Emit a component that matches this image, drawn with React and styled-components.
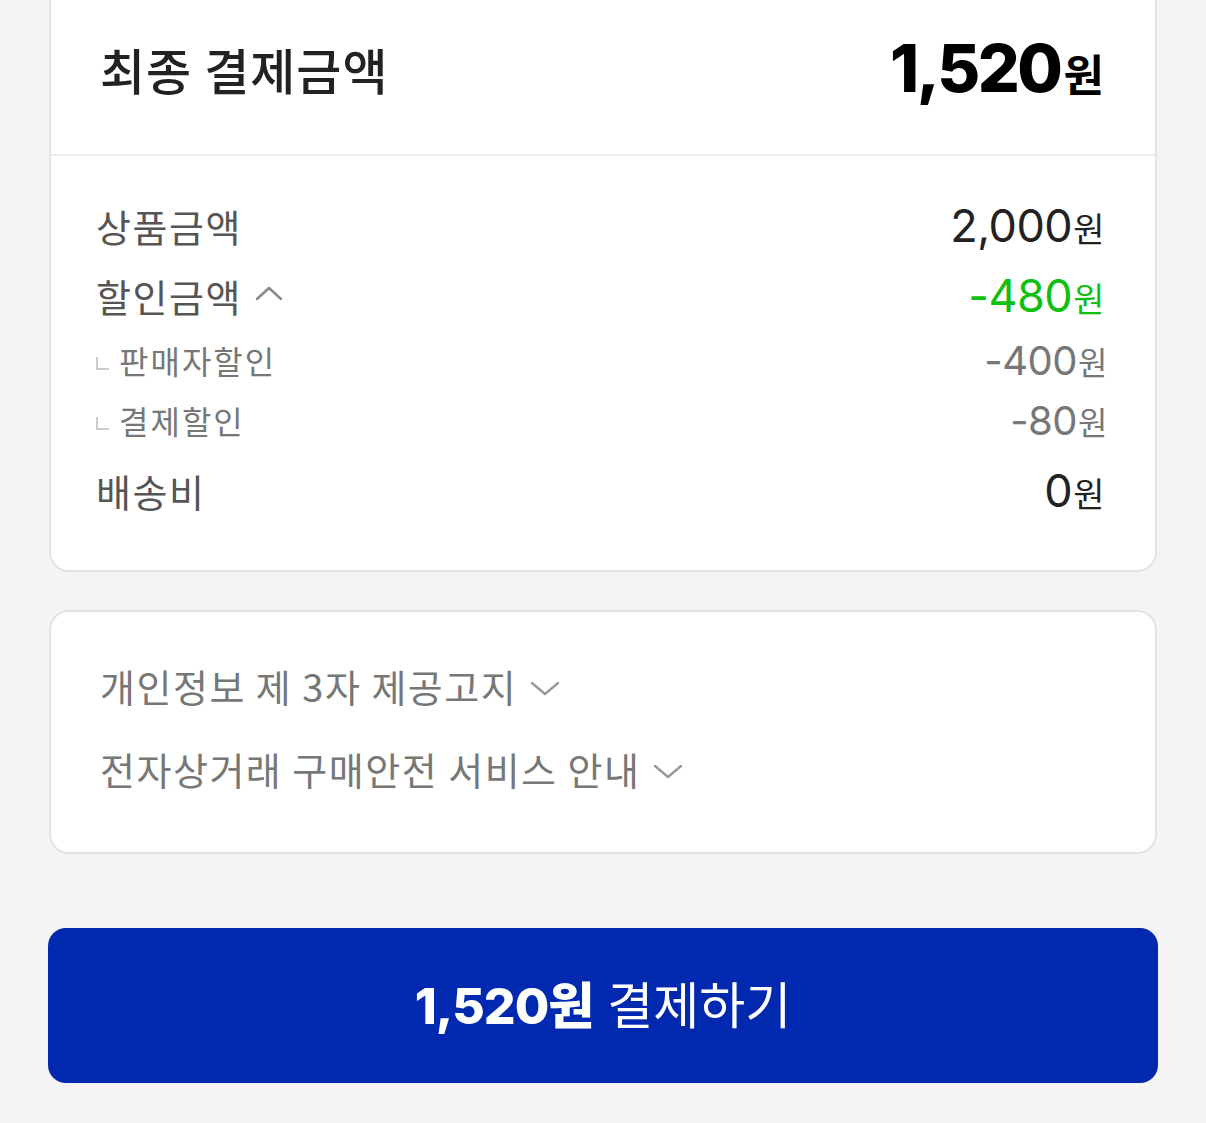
import React from 'react'
import styled, {createGlobalStyle} from 'styled-components'

const GlobalStyle = createGlobalStyle`
  html, body {
    margin: 0;
    padding: 0;
    background: #f4f4f4;
  }
  body {
    font-family: "Inter", "Noto Sans CJK KR", sans-serif;
    overflow: hidden;
  }
`;

//Data for the breakdown rows
const rows = [
    {label: '상품금액', value: '2,000', kind: 'main'},
    {label: '할인금액', value: '-480', kind: 'discount', toggle: true},
    {label: '판매자할인', value: '-400', kind: 'sub'},
    {label: '결제할인', value: '-80', kind: 'sub'},
    {label: '배송비', value: '0', kind: 'main', spaced: true},
];

const notices = ['개인정보 제 3자 제공고지', '전자상거래 구매안전 서비스 안내'];

const ChevronUp = () => (
    <svg width="28" height="18" viewBox="0 0 28 18" fill="none">
        <path d="M2 15 L14 4 L26 15" stroke="#888" strokeWidth="2.4" strokeLinecap="round" strokeLinejoin="round"/>
    </svg>
);

const ChevronDown = () => (
    <svg width="30" height="18" viewBox="0 0 30 18" fill="none">
        <path d="M2 4 L15 15 L28 4" stroke="#999" strokeWidth="2.4" strokeLinecap="round" strokeLinejoin="round"/>
    </svg>
);

const App = () => {
    return (
        <>
            <GlobalStyle/>
            <Page>
                <Card>
                    <Header>
                        <Title>최종 결제금액</Title>
                        <Total>1,520<small>원</small></Total>
                    </Header>
                    <Breakdown>
                        {rows.map((row) => (
                            <Row kind={row.kind} spaced={row.spaced} key={row.label}>
                                <Label kind={row.kind}>
                                    {row.kind === 'sub' && <Corner/>}
                                    {row.label}
                                    {row.toggle && <ChevronUp/>}
                                </Label>
                                <Value kind={row.kind}>{row.value}<small>원</small></Value>
                            </Row>
                        ))}
                    </Breakdown>
                </Card>
                <NoticeCard>
                    {notices.map((text) => (
                        <Notice key={text}>
                            {text}
                            <ChevronDown/>
                        </Notice>
                    ))}
                </NoticeCard>
                <PayButton>
                    <strong>1,520원</strong> 결제하기
                </PayButton>
            </Page>
        </>
    );
};

//Styles
const Page = styled.div`
  width: 1206px;
  height: 1123px;
  box-sizing: border-box;
  padding: 0 49px;
  display: flex;
  flex-direction: column;
`;

const Card = styled.div`
  margin-top: -20px;
  background: #fff;
  border: 2px solid #e3e3e3;
  border-radius: 20px;
`;

const Header = styled.div`
  height: 174px;
  box-sizing: border-box;
  padding: 0 51px 0 49px;
  display: flex;
  align-items: center;
  justify-content: space-between;
  border-bottom: 2px solid #ececec;
`;

const Title = styled.h2`
  margin: 0;
  font-family: "Noto Sans CJK KR", sans-serif;
  font-size: 49px;
  font-weight: 500;
  color: #222;
  letter-spacing: 1px;
`;

const Total = styled.div`
  font-size: 66px;
  font-weight: 800;
  color: #000;
  letter-spacing: -2.5px;
  small {
    font-family: "Noto Sans CJK KR", sans-serif;
    font-size: 44px;
    font-weight: 700;
    letter-spacing: 0;
    margin-left: 3px;
  }
`;

const Breakdown = styled.div`
  padding: 34px 51px 45px 45px;
  display: flex;
  flex-direction: column;
`;

const Row = styled.div`
  display: flex;
  align-items: center;
  justify-content: space-between;
  height: ${(p) => (p.kind === 'sub' ? '60px' : '70px')};
  margin-top: ${(p) => (p.spaced ? '5px' : '0')};
`;

const Label = styled.div`
  display: flex;
  align-items: center;
  gap: ${(p) => (p.kind === 'sub' ? '10px' : '13px')};
  font-family: "Noto Sans CJK KR", sans-serif;
  font-size: ${(p) => (p.kind === 'sub' ? '32px' : '38px')};
  letter-spacing: ${(p) => (p.kind === 'sub' ? '2px' : '1.5px')};
  color: ${(p) => (p.kind === 'sub' ? '#777' : '#555')};
  svg {
    margin-top: -4px;
  }
`;

const Corner = styled.span`
  width: 11px;
  height: 11px;
  margin-top: 6px;
  border-left: 2px solid #ccc;
  border-bottom: 2px solid #ccc;
`;

const valueColor = {main: '#222', discount: '#10c010', sub: '#777'};

const Value = styled.div`
  font-size: ${(p) => (p.kind === 'sub' ? '40px' : '45px')};
  color: ${(p) => valueColor[p.kind]};
  margin-right: ${(p) => (p.kind === 'sub' ? '-3px' : '0')};
  letter-spacing: -0.5px;
  small {
    font-family: "Noto Sans CJK KR", sans-serif;
    font-size: ${(p) => (p.kind === 'sub' ? '32px' : '34px')};
    margin-left: 1px;
  }
`;

const NoticeCard = styled(Card)`
  margin-top: 38px;
  height: 244px;
  box-sizing: border-box;
  padding: 47px 49px;
  display: flex;
  flex-direction: column;
  gap: 31px;
`;

const Notice = styled.div`
  display: flex;
  align-items: center;
  gap: 13px;
  height: 52px;
  font-family: "Noto Sans CJK KR", sans-serif;
  font-size: 38px;
  letter-spacing: 1.5px;
  color: #777;
  svg {
    margin-top: 6px;
  }
`;

const PayButton = styled.button`
  margin: 74px -1px 0;
  height: 155px;
  border: none;
  border-radius: 18px;
  background: #0029b0;
  color: #fff;
  font-family: "Noto Sans CJK KR", sans-serif;
  font-size: 50px;
  font-weight: 400;
  display: flex;
  align-items: center;
  justify-content: center;
  gap: 14px;
  padding-bottom: 8px;
  strong {
    font-family: "Inter", "Noto Sans CJK KR", sans-serif;
    font-weight: 800;
    font-size: 50px;
    letter-spacing: -1px;
  }
`;

export default App;
